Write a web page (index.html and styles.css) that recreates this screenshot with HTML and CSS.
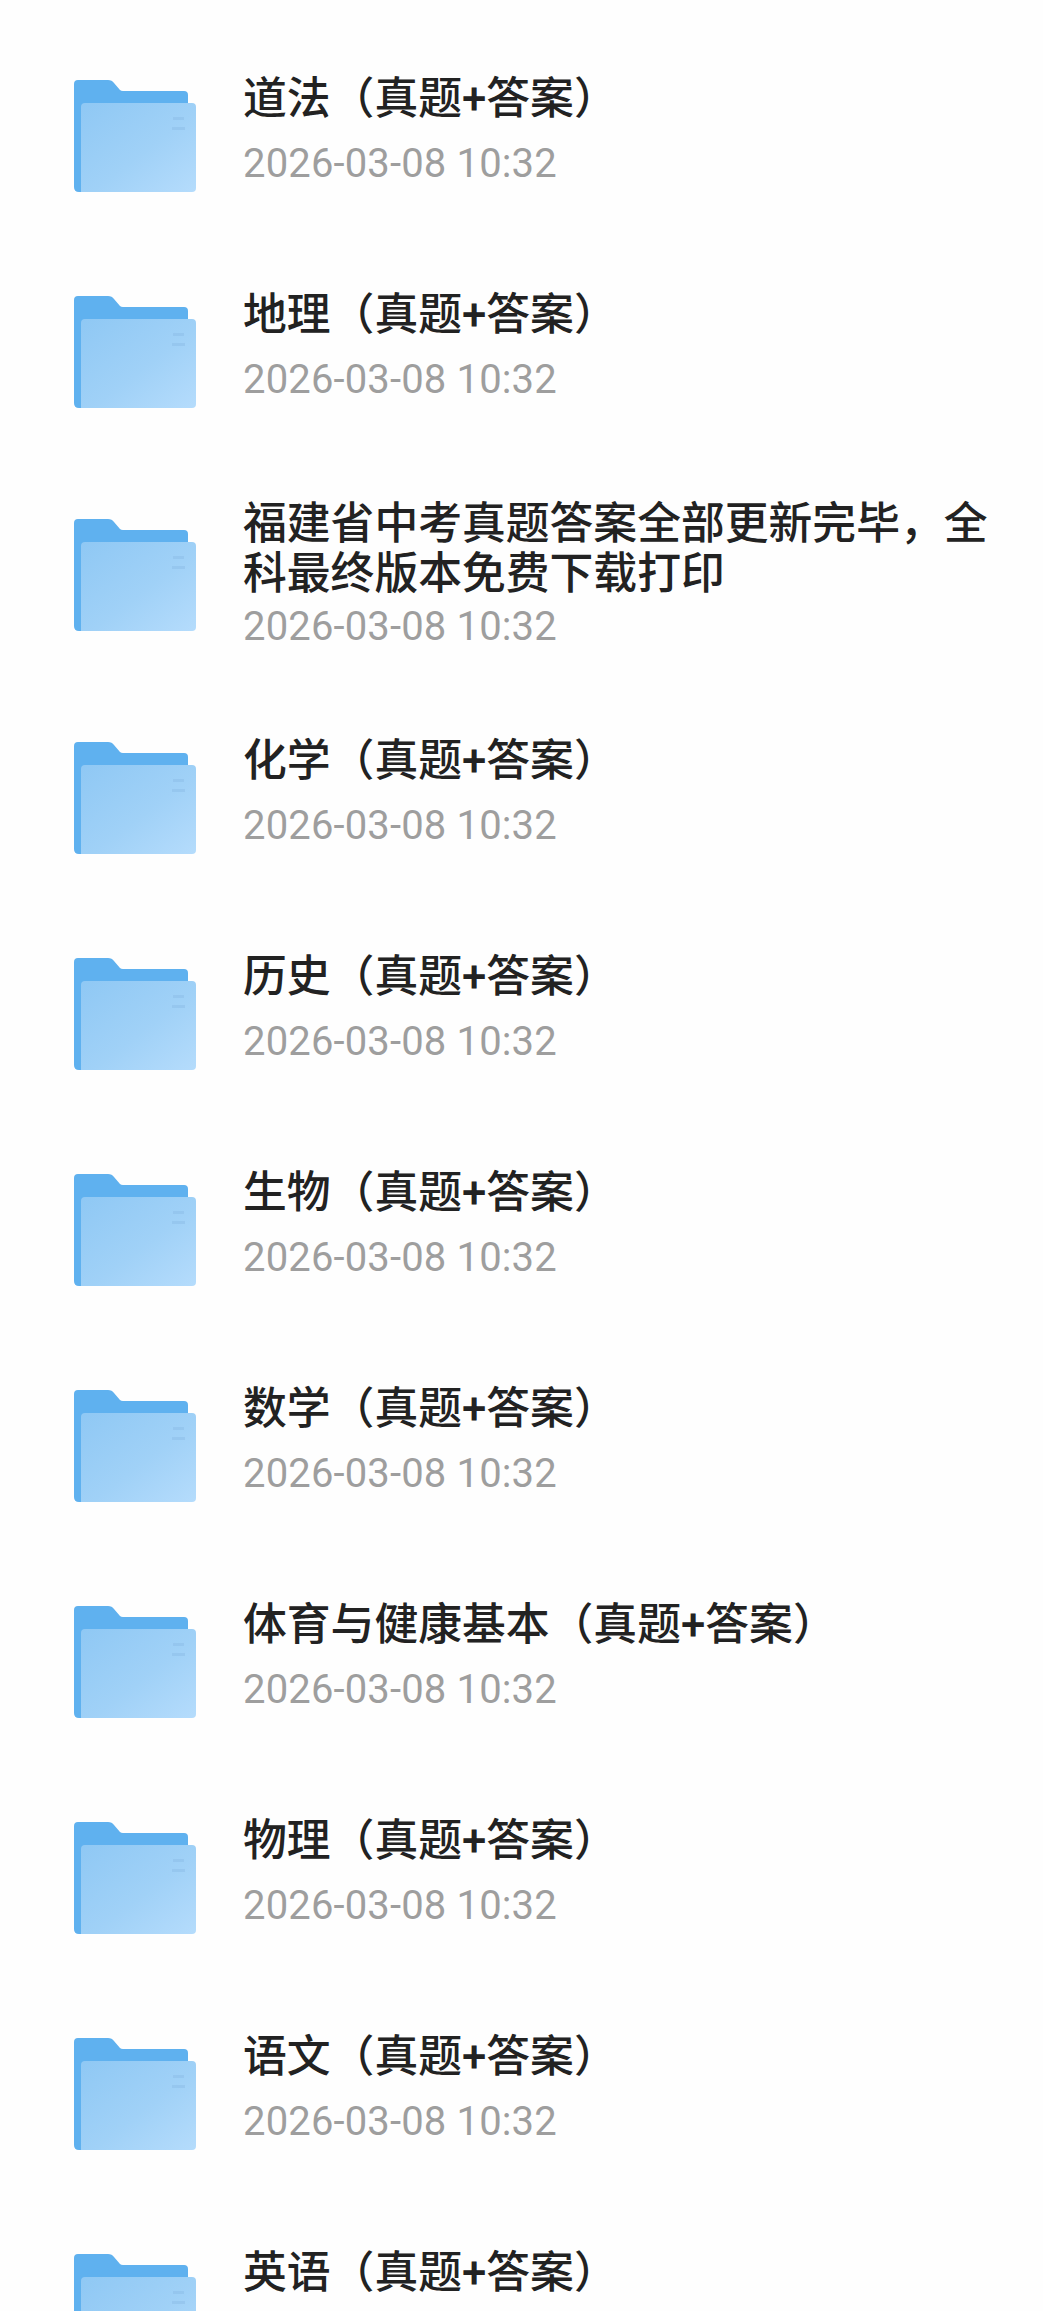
FILE: index.html
```html
<!doctype html>
<html lang="zh-CN">
<head>
  <meta charset="utf-8" />
  <meta name="viewport" content="width=device-width,initial-scale=1" />
  <title>文件列表</title>
  <link rel="stylesheet" href="styles.css">
</head>
<body>
  <svg class="defs" width="0" height="0" aria-hidden="true">
    <defs>
      <linearGradient id="folderFront" x1="0" y1="0" x2="1" y2="1">
        <stop offset="0" stop-color="#8fc8f4" />
        <stop offset=".55" stop-color="#a0d1f7" />
        <stop offset="1" stop-color="#b5dcfc" />
      </linearGradient>
      <symbol id="folder" viewBox="0 0 122 112">
        <path fill="#5fb1ef" d="M4 0H34Q38 0 40 3L46 10Q47 11 49 11H110Q114 11 114 15V40H7V112H5Q0 112 0 107V4Q0 0 4 0Z" />
        <path fill="url(#folderFront)" d="M11 23H118Q122 23 122 27V108Q122 112 118 112H7V27Q7 23 11 23Z" />
        <path fill="#8fc0ea" opacity=".6" d="M99 37H110V40H99ZM98 47H111V50H98Z" />
      </symbol>
    </defs>
  </svg>

  <main class="list">
    <div class="item">
      <svg class="folder"><use href="#folder" /></svg>
      <div class="info">
        <div class="name">道法（真题+答案）</div>
        <div class="date">2026-03-08 10:32</div>
      </div>
    </div>
    <div class="item">
      <svg class="folder"><use href="#folder" /></svg>
      <div class="info">
        <div class="name">地理（真题+答案）</div>
        <div class="date">2026-03-08 10:32</div>
      </div>
    </div>
    <div class="item long">
      <svg class="folder"><use href="#folder" /></svg>
      <div class="info">
        <div class="name">福建省中考真题答案全部更新完毕，全科最终版本免费下载打印</div>
        <div class="date">2026-03-08 10:32</div>
      </div>
    </div>
    <div class="item">
      <svg class="folder"><use href="#folder" /></svg>
      <div class="info">
        <div class="name">化学（真题+答案）</div>
        <div class="date">2026-03-08 10:32</div>
      </div>
    </div>
    <div class="item">
      <svg class="folder"><use href="#folder" /></svg>
      <div class="info">
        <div class="name">历史（真题+答案）</div>
        <div class="date">2026-03-08 10:32</div>
      </div>
    </div>
    <div class="item">
      <svg class="folder"><use href="#folder" /></svg>
      <div class="info">
        <div class="name">生物（真题+答案）</div>
        <div class="date">2026-03-08 10:32</div>
      </div>
    </div>
    <div class="item">
      <svg class="folder"><use href="#folder" /></svg>
      <div class="info">
        <div class="name">数学（真题+答案）</div>
        <div class="date">2026-03-08 10:32</div>
      </div>
    </div>
    <div class="item">
      <svg class="folder"><use href="#folder" /></svg>
      <div class="info">
        <div class="name">体育与健康基本（真题+答案）</div>
        <div class="date">2026-03-08 10:32</div>
      </div>
    </div>
    <div class="item">
      <svg class="folder"><use href="#folder" /></svg>
      <div class="info">
        <div class="name">物理（真题+答案）</div>
        <div class="date">2026-03-08 10:32</div>
      </div>
    </div>
    <div class="item">
      <svg class="folder"><use href="#folder" /></svg>
      <div class="info">
        <div class="name">语文（真题+答案）</div>
        <div class="date">2026-03-08 10:32</div>
      </div>
    </div>
    <!-- last row runs off the bottom, its date is below the fold -->
    <div class="item cut">
      <svg class="folder"><use href="#folder" /></svg>
      <div class="info">
        <div class="name">英语（真题+答案）</div>
      </div>
    </div>
  </main>
</body>
</html>
```

FILE: styles.css
```css
:root{
  --text:#222222;
  --muted:#9e9e9e;
}
html,body{height:100%;margin:0;overflow:hidden;background:#fefefe;}
body{font-family:"Roboto","Noto Sans CJK SC",sans-serif;color:var(--text);}
.defs{display:block;height:0;}
.list{padding:28px 32px 0 74px;}
.item{display:flex;align-items:center;gap:47px;height:216px;}
.item.long{height:230px;}
.folder{flex:none;width:122px;height:112px;}
.info{flex:1;min-width:0;margin-bottom:10px;}
.item.long .info{margin-bottom:0;}
.item.cut .info{margin-bottom:75px;}
.name{font-size:43.8px;line-height:50px;font-weight:500;}
.date{margin-top:15px;font-size:40px;line-height:50px;letter-spacing:.15px;color:var(--muted);}
.item.long .date{margin-top:3px;}
```
